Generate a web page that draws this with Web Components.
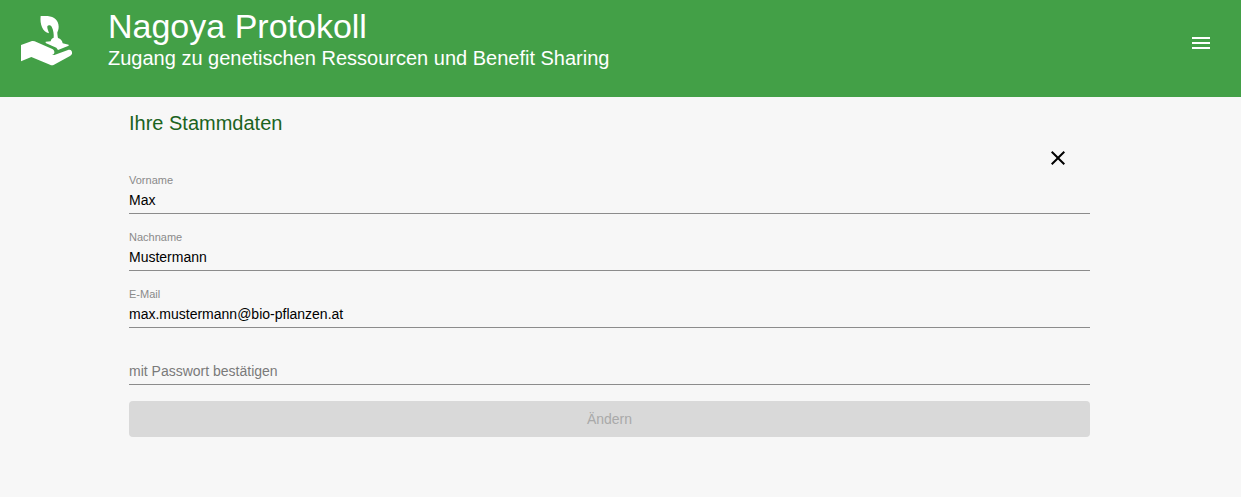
<!DOCTYPE html>
<html lang="de">
<head>
  <meta charset="utf-8">
  <meta name="viewport" content="width=device-width, initial-scale=1">
  <title>Nagoya Protokoll</title>
  <style>
    body {
      margin: 0;
      background: #f7f7f7;
      font-family: "Liberation Sans", Arial, sans-serif;
      color: #000;
    }
  </style>
</head>
<body>
  <app-header>
    Nagoya Protokoll
    <span slot="subtitle">Zugang zu genetischen Ressourcen und Benefit Sharing</span>
  </app-header>
  <profile-form>
    <span slot="title">Ihre Stammdaten</span>
    <text-field label="Vorname" value="Max"></text-field>
    <text-field label="Nachname" value="Mustermann"></text-field>
    <text-field label="E-Mail" type="email" value="max.mustermann@bio-pflanzen.at"></text-field>
    <text-field label="mit Passwort bestätigen" type="password"></text-field>
    <span slot="action">Ändern</span>
  </profile-form>

  <script>
    class AppHeader extends HTMLElement {
      connectedCallback() {
        this.attachShadow({ mode: 'open' });
        this.shadowRoot.innerHTML = `
          <style>
            :host {
              display: block;
              background: #43a047;
              color: #fff;
            }
            header {
              display: flex;
              align-items: flex-start;
              padding: 6px 20px 26px 20px;
            }
            .logo {
              flex: none;
              width: 53px;
              height: 51px;
              margin: 9px 35px 0 0;
              fill: #fff;
            }
            .titles {
              flex: 1;
            }
            h1, p {
              margin: 0;
              font-weight: 400;
            }
            h1 {
              font-size: 34px;
              line-height: 40px;
            }
            p {
              font-size: 20px;
              line-height: 25px;
            }
            button {
              display: flex;
              flex: none;
              margin-top: 17px;
              padding: 8px;
              border: 0;
              background: none;
              color: inherit;
              cursor: pointer;
            }
            button svg {
              width: 24px;
              height: 24px;
              fill: currentColor;
            }
          </style>
          <header>
            <svg class="logo" viewBox="60 45 159 153" aria-hidden="true">
              <path d="M122 48H143C163 50 176 62 176 80C176 88 174 93 172 97C172 104 173 109 174 114C182 116 187 122 188 130L206 134V137L174 150L169 143L137 129V125L152 124C153 118 156 114 161 113C162 102 160 90 155 80C151 75 144 75 142 79C141 86 145 92 147 100C128 96 119 73 122 48Z"/>
              <path d="M63 135L96 123Q100 122 104 124L157 147C162 149 164 155 163 159Q162 163 156 165H163L204 150C212 147 218 153 216 161C215 164 213 166 210 168L162 194C158 196 154 196 150 194L94 171L63 184Z"/>
            </svg>
            <div class="titles">
              <h1><slot></slot></h1>
              <p><slot name="subtitle"></slot></p>
            </div>
            <button type="button" aria-label="Menü">
              <svg viewBox="0 0 24 24"><path d="M3 18h18v-2H3v2zm0-5h18v-2H3v2zm0-7v2h18V6H3z"/></svg>
            </button>
          </header>
        `;
      }
    }

    class TextField extends HTMLElement {
      connectedCallback() {
        this.attachShadow({ mode: 'open' });
        this.shadowRoot.innerHTML = `
          <style>
            :host {
              display: block;
            }
            .field {
              display: grid;
              grid-template-rows: 18px 24px;
              border-bottom: 1px solid #8c8c8c;
            }
            label {
              grid-area: 1 / 1;
              font-size: 11px;
              line-height: 18px;
              color: #8a8a8a;
              pointer-events: none;
            }
            input {
              grid-area: 2 / 1;
              min-width: 0;
              margin: 0;
              padding: 0 0 2px;
              border: 0;
              outline: 0;
              background: none;
              color: inherit;
              font: inherit;
              font-size: 14px;
            }
            /* an empty field shows its label on the input line */
            .field:has(input:placeholder-shown) label {
              grid-area: 2 / 1;
              font-size: 14px;
              line-height: 22px;
              color: #7a7a7a;
            }
          </style>
          <div class="field">
            <label for="input"></label>
            <input id="input" placeholder=" ">
          </div>
        `;
        const input = this.shadowRoot.querySelector('input');
        this.shadowRoot.querySelector('label').textContent = this.getAttribute('label');
        input.type = this.getAttribute('type') || 'text';
        input.value = this.getAttribute('value') || '';
      }
    }

    class ProfileForm extends HTMLElement {
      connectedCallback() {
        this.attachShadow({ mode: 'open' });
        this.shadowRoot.innerHTML = `
          <style>
            :host {
              display: block;
              padding: 14px 151px 60px 129px;
            }
            h2 {
              margin: 0;
              font-size: 20px;
              font-weight: 400;
              line-height: 24px;
              color: #1b6321;
            }
            .tools {
              display: flex;
              justify-content: flex-end;
              padding: 11px 20px 1px;
            }
            .close {
              display: flex;
              padding: 0;
              border: 0;
              background: none;
              color: inherit;
              cursor: pointer;
            }
            .close svg {
              width: 24px;
              height: 24px;
              fill: currentColor;
            }
            form {
              display: flex;
              flex-direction: column;
              gap: 14px;
            }
            .submit {
              height: 36px;
              margin-top: 2px;
              border: 0;
              border-radius: 4px;
              background: #d9d9d9;
              color: #a9a9a9;
              font: inherit;
              font-size: 14px;
            }
          </style>
          <h2><slot name="title"></slot></h2>
          <div class="tools">
            <button class="close" type="button" aria-label="Schließen">
              <svg viewBox="0 0 24 24"><path d="M19 6.41L17.59 5 12 10.59 6.41 5 5 6.41 10.59 12 5 17.59 6.41 19 12 13.41 17.59 19 19 17.59 13.41 12z"/></svg>
            </button>
          </div>
          <form>
            <slot></slot>
            <button class="submit" type="submit" disabled><slot name="action"></slot></button>
          </form>
        `;
      }
    }

    customElements.define('app-header', AppHeader);
    customElements.define('text-field', TextField);
    customElements.define('profile-form', ProfileForm);
  </script>
</body>
</html>
